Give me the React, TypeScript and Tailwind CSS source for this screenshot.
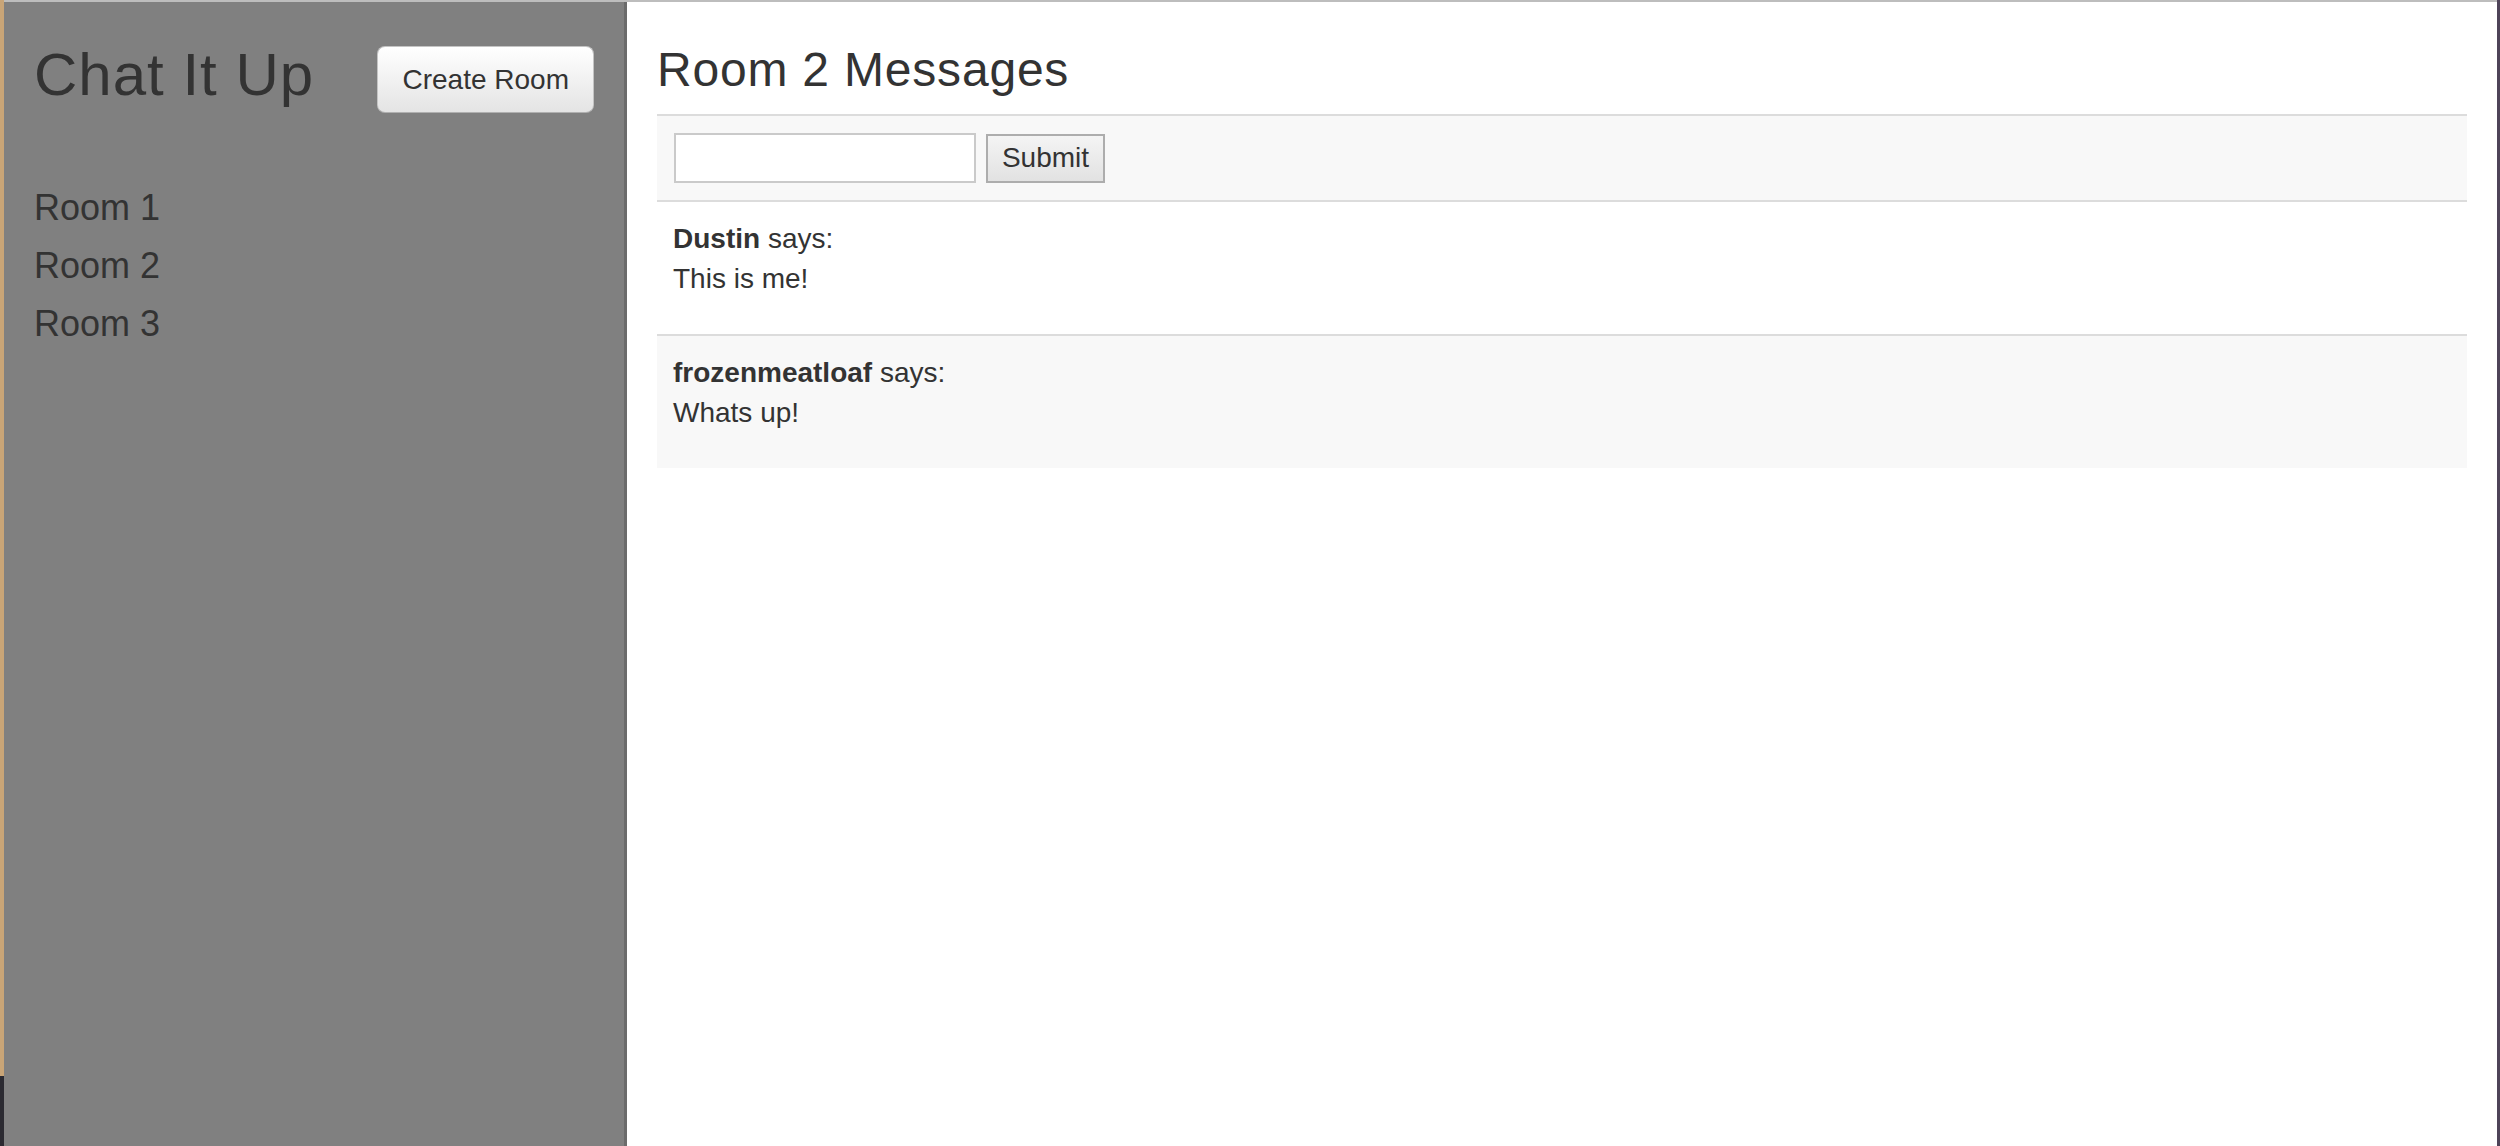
const rooms = ["Room 1", "Room 2", "Room 3"];

const messages = [
  { user: "Dustin", text: "This is me!" },
  { user: "frozenmeatloaf", text: "Whats up!" },
];

function Sidebar() {
  return (
    <aside className="flex w-[623px] shrink-0 flex-col border-r-[3px] border-[#6b6b6b] bg-[#808080] px-[30px] text-[#333]">
      <div className="flex items-start justify-between">
        <h2 className="mt-[40px] text-[60px] leading-[66px] tracking-[1px]">Chat It Up</h2>
        <button className="mt-[44px] h-[67px] rounded-[8px] border border-[#c4c4c4] border-b-[#b0b0b0] bg-gradient-to-b from-white to-[#e4e4e4] px-[24px] text-[28px] leading-[40px] text-[#333] shadow-[inset_0_1px_0_rgba(255,255,255,0.3)]">
          Create Room
        </button>
      </div>
      <ul className="mt-[66px] flex flex-col">
        {rooms.map((room) => (
          <li key={room} className="text-[36px] leading-[58px]">
            {room}
          </li>
        ))}
      </ul>
    </aside>
  );
}

function MessagePanel() {
  return (
    <main className="flex flex-1 flex-col bg-white px-[30px] text-[#333]">
      <h3 className="mt-[41px] mb-[18px] text-[48px] leading-[53px] tracking-[0.8px]">Room 2 Messages</h3>
      <div className="flex flex-col">
        <div className="flex items-center border-t-2 border-[#dcdcdc] bg-[#f8f8f8] px-[17px] py-[17px]">
          <input
            type="text"
            className="h-[50px] w-[302px] border-2 border-[#cacaca] bg-white px-2 text-[28px] outline-none"
          />
          <button className="ml-[10px] h-[49px] w-[119px] border-2 border-[#adadad] bg-gradient-to-b from-[#f4f4f4] to-[#e2e2e2] text-[28px] leading-[40px] text-[#333]">
            Submit
          </button>
        </div>
        {messages.map((m, i) => (
          <div
            key={m.user}
            className={
              i % 2 === 1
                ? "border-t-2 border-[#dcdcdc] bg-[#f8f8f8] px-[16px] pt-[17px] pb-[35px] text-[28px] leading-[40px]"
                : "border-t-2 border-[#dcdcdc] bg-white px-[16px] pt-[17px] pb-[35px] text-[28px] leading-[40px]"
            }
          >
            <div>
              <span className="font-bold">{m.user}</span> says:
            </div>
            <div>{m.text}</div>
          </div>
        ))}
      </div>
    </main>
  );
}

export default function App() {
  return (
    <div
      className="flex h-[1146px] w-[2500px] overflow-hidden bg-[#4e4358]"
      style={{ fontFamily: '"Liberation Sans", Arial, Helvetica, sans-serif' }}
    >
      <div className="flex w-[4px] shrink-0 flex-col">
        <div className="flex-1 bg-[#c9a577]" />
        <div className="h-[70px] bg-[#2b2a31]" />
      </div>
      <div className="flex w-[2493px] shrink-0 flex-col border-t-2 border-[#bdbdbd]">
        <div className="flex flex-1">
          <Sidebar />
          <MessagePanel />
        </div>
      </div>
    </div>
  );
}
